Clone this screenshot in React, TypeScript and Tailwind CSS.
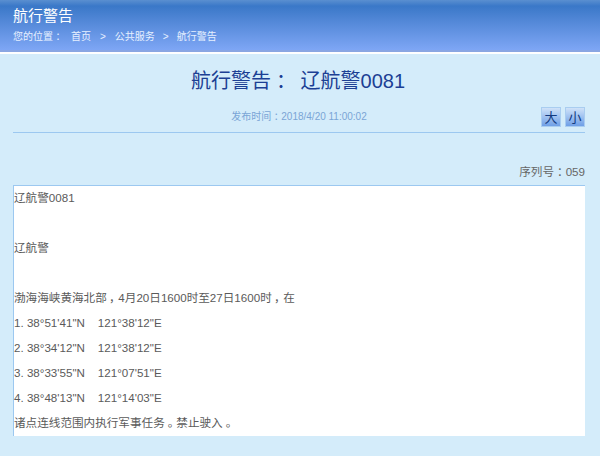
const font = { fontFamily: '"Liberation Sans", "Noto Sans CJK SC", Arial, sans-serif' };

function Mark({ children }: { children: string }) {
  return <span className="inline-block w-[1em] text-center [font-feature-settings:'palt']">{children}</span>;
}

function SizeButton({ label }: { label: string }) {
  return (
    <div className="flex h-[20px] w-[20px] items-center justify-center border border-[#a9cdf0] bg-gradient-to-b from-[#cfe2f8] to-[#6f9fe6] text-[13px] leading-none text-[#123a80]">
      {label}
    </div>
  );
}

function Line({ children }: { children?: React.ReactNode }) {
  return <div className="h-[25px] whitespace-pre text-[11.6px] leading-[23px] text-[#5a5a5a]">{children}</div>;
}

export default function App() {
  return (
    <div style={font} className="h-[456px] w-[600px] overflow-hidden bg-[#d4ecfa]">
      <header className="h-[52px] border-b-2 border-[#8aa6e2] bg-gradient-to-b from-[#5a8fd0] via-[#3a78c8] via-[12%] to-[#7ea6f5] pl-[13px] pt-[6px] text-white">
        <div className="text-[15px] leading-[20px]">航行警告</div>
        <div className="mt-[4px] flex text-[10px] leading-[14px] text-[#e6f0ff]">
          <span className="w-[58px]">您的位置<Mark>：</Mark></span>
          <span>首页</span>
          <span className="mx-[9px]">&gt;</span>
          <span>公共服务</span>
          <span className="mx-[8px]">&gt;</span>
          <span>航行警告</span>
        </div>
      </header>
      <div className="h-[2px] bg-white" />
      <main className="pl-[13px] pr-[15px]">
        <h1 className="mt-[13px] whitespace-pre pr-[2px] text-center text-[20px] leading-[28px] font-normal text-[#1c3f94]">
          航行警告<Mark>：</Mark> <span className="ml-[4px]">辽航警0081</span>
        </h1>
        <div className="relative mt-[14px] h-[24px] border-b border-[#9cc8f0]">
          <p className="pt-[1px] text-center text-[10px] leading-[14px] text-[#7aa5d6]">发布时间<Mark>：</Mark>2018/4/20 11:00:02</p>
          <div className="absolute right-0 top-[-2px] flex gap-[4px]">
            <SizeButton label="大" />
            <SizeButton label="小" />
          </div>
        </div>
        <div className="mt-[30px] text-right text-[11.6px] leading-[17px] text-[#666666]">序列号<Mark>：</Mark>059</div>
        <div className="mt-[5px] h-[251px] w-[572px] border-l border-t border-[#9cc8f0] bg-white">
          <Line>辽航警0081</Line>
          <Line />
          <Line>辽航警</Line>
          <Line />
          <Line>渤海海峡黄海北部<Mark>，</Mark>4月20日1600时至27日1600时<Mark>，</Mark>在</Line>
          <Line>{"1. 38°51'41\"N    121°38'12\"E"}</Line>
          <Line>{"2. 38°34'12\"N    121°38'12\"E"}</Line>
          <Line>{"3. 38°33'55\"N    121°07'51\"E"}</Line>
          <Line>{"4. 38°48'13\"N    121°14'03\"E"}</Line>
          <Line>诸点连线范围内执行军事任务<Mark>。</Mark>禁止驶入<Mark>。</Mark></Line>
        </div>
      </main>
    </div>
  );
}
